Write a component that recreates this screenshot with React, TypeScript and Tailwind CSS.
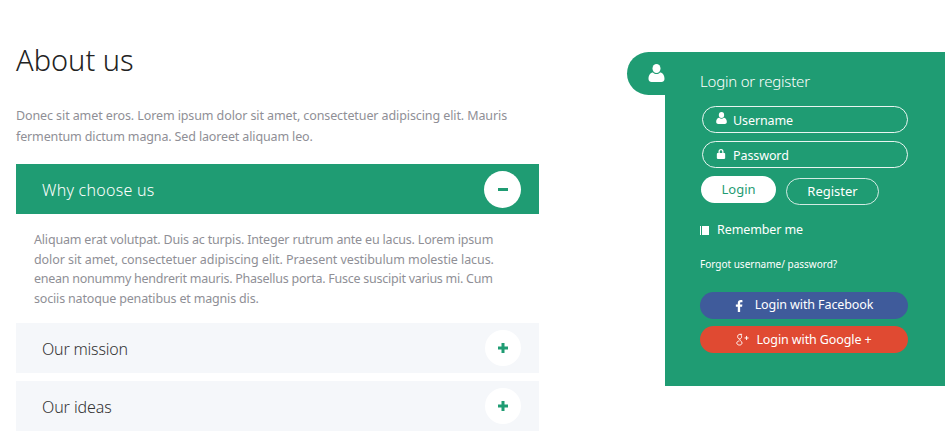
const ui = { fontFamily: '"Noto Sans", sans-serif' };

function UserIcon({ className }: { className: string }) {
  return (
    <svg viewBox="0 0 16 18" className={className} fill="currentColor">
      <ellipse cx="8" cy="4.5" rx="4" ry="4.5" />
      <path d="M0 15c0-4 2-6.500 4.500-6.500C5.500 9.500 6.700 10 8 10s2.500-.5 3.500-1.500C14 8.500 16 11 16 15c0 2-1.500 3-3 3H3c-1.500 0-3-1-3-3z" />
    </svg>
  );
}

function LockIcon({ className }: { className: string }) {
  return (
    <svg viewBox="0 0 12 13" className={className} fill="currentColor">
      <path d="M3 6V4a3 3 0 0 1 6 0v2h-1.500V4a1.500 1.500 0 0 0-3 0v2z" />
      <rect x="1" y="6" width="10" height="7" rx="1" />
    </svg>
  );
}

function PlusGlyph() {
  return (
    <svg viewBox="0 0 10 10" className="h-[10px] w-[10px]" fill="currentColor">
      <path d="M3.500 0h3v3.500H10v3H6.500V10h-3V6.500H0v-3h3.500z" />
    </svg>
  );
}

function AccordionRow({ title, tracking }: { title: string; tracking: string }) {
  return (
    <div className="flex h-[50px] w-full items-center justify-between bg-[#f5f7fa] pl-[26px] pr-[18px]">
      <span className={`pt-[2px] text-[16px] font-light text-[#333] ${tracking}`}>{title}</span>
      <span className="flex h-[36px] w-[36px] items-center justify-center rounded-full bg-white text-[#1f9c73]">
        <PlusGlyph />
      </span>
    </div>
  );
}

function Field({ icon, label }: { icon: React.ReactNode; label: string }) {
  return (
    <div className="flex h-[27px] w-[206px] items-center rounded-full border border-white/90 pl-[13px] text-[12.5px] tracking-[-0.1px] text-white">
      <span className="flex w-[17px] justify-start pb-[3px]">{icon}</span>
      <span className="pt-[4px]">{label}</span>
    </div>
  );
}

export default function App() {
  return (
    <div className="flex h-[438px] w-[945px] overflow-hidden bg-white" style={ui}>
      <main className="ml-4 w-[523px] pt-[40px]">
        <h1 className="text-[29px] font-light leading-[40px] text-[#222]">About us</h1>
        <p className="mt-[25px] whitespace-nowrap text-[12.5px] leading-[21px] tracking-[-0.1px] text-[#8f8f96]">
          Donec sit amet eros. Lorem ipsum dolor sit amet, consectetuer adipiscing elit. Mauris
          <br />
          <span className="tracking-[-0.14px]">fermentum dictum magna. Sed laoreet aliquam leo.</span>
        </p>
        <div className="mt-[17px] flex h-[50px] items-center justify-between bg-[#1f9c73] pl-[26px] pr-[18px]">
          <span className="pt-px text-[16px] font-light tracking-[0.25px] text-white">Why choose us</span>
          <span className="flex h-[37px] w-[37px] items-center justify-center rounded-full bg-white text-[#1f9c73]">
            <span className="h-[3px] w-[10px] bg-[#1f9c73]" />
          </span>
        </div>
        <p className="h-[109px] whitespace-nowrap px-[18px] pt-4 text-[12.5px] leading-[19.7px] text-[#8f8f96]">
          <span className="tracking-[-0.18px]">Aliquam erat volutpat. Duis ac turpis. Integer rutrum ante eu lacus. Lorem ipsum</span>
          <br />
          <span className="tracking-[-0.07px]">dolor sit amet, consectetuer adipiscing elit. Praesent vestibulum molestie lacus.</span>
          <br />
          <span className="tracking-[-0.25px]">enean nonummy hendrerit mauris. Phasellus porta. Fusce suscipit varius mi. Cum</span>
          <br />
          <span className="tracking-[-0.17px]">sociis natoque penatibus et magnis dis.</span>
        </p>
        <div className="flex flex-col gap-2">
          <AccordionRow title="Our mission" tracking="tracking-[-0.2px]" />
          <AccordionRow title="Our ideas" tracking="tracking-[-0.1px]" />
        </div>
      </main>

      <aside className="relative ml-[126px] mt-[52px] h-[334px] w-[280px] bg-[#1f9c73] pl-[35px] pt-[19px] text-white">
        <div className="absolute left-[-38px] top-0 flex h-[43px] w-[38px] items-start rounded-l-[22px] bg-[#1f9c73] pl-[21px] pt-[12px]">
          <UserIcon className="h-[18px] w-[17px] shrink-0" />
        </div>
        <h2 className="text-[15px] font-light leading-[20px] tracking-[-0.2px]">Login or register</h2>
        <div className="ml-[2px] mt-[15px] flex flex-col gap-[8px]">
          <Field icon={<UserIcon className="h-[12px] w-[11px]" />} label="Username" />
          <Field icon={<LockIcon className="h-[11px] w-[10px]" />} label="Password" />
        </div>
        <div className="ml-[1px] mt-[8px] flex items-start gap-[10px] text-[13px]">
          <div className="flex h-[27px] w-[75px] items-center justify-center rounded-full bg-white text-[#1f9c73]">Login</div>
          <div className="mt-[2px] flex h-[27px] w-[93px] items-center justify-center rounded-full border border-white/80 pt-px">Register</div>
        </div>
        <div className="mt-[15px] flex h-5 items-center text-[12.5px] tracking-[-0.1px]">
          <span className="mr-[8px] flex h-[9px] w-[9px] items-stretch gap-px">
            <span className="w-px bg-white" />
            <span className="flex-1 bg-white" />
          </span>
          Remember me
        </div>
        <div className="mt-[17px] text-[10px] leading-[14px]">Forgot username/ password?</div>
        <div className="mt-[21px] flex flex-col gap-[7px] text-[12.5px] tracking-[-0.1px]">
          <div className="flex h-[27px] w-[208px] items-center justify-center gap-[12px] rounded-full bg-[#3f5b9b]">
            <svg viewBox="0 0 10 16" className="h-[12px] w-[8px]" fill="currentColor">
              <path d="M6.500 16V9h2.600l.4-3H6.500V4.300c0-.9.3-1.400 1.500-1.400h1.600V.2C9.300.1 8.400 0 7.300 0 5 0 3.400 1.400 3.400 4v2H.8v3h2.600v7z" />
            </svg>
            <span>Login with Facebook</span>
          </div>
          <div className="flex h-[27px] w-[208px] items-center justify-center gap-[7px] rounded-full bg-[#e04a32]">
            <svg viewBox="0 0 16 16" className="h-[14px] w-[13px]" fill="none" stroke="currentColor" strokeWidth="1.200">
              <path d="M7.500 1H4.800C3.200 1 2 2.200 2 3.900c0 1.500 1 2.700 2.400 2.700 1.500 0 2.500-1.200 2.500-2.700 0-1.100-.6-2.100-1.300-2.800M4.800 6.800c-.6.900 0 1.500.9 2.200 1 .8 1.700 1.500 1.700 2.600 0 1.500-1.300 2.600-3.100 2.600-1.900 0-3.300-1-3.300-2.500s1.400-2.500 3.200-2.500" />
              <path d="M10.500 5.500h5M13 3v5" />
            </svg>
            <span className="pt-px">Login with Google +</span>
          </div>
        </div>
      </aside>
    </div>
  );
}
